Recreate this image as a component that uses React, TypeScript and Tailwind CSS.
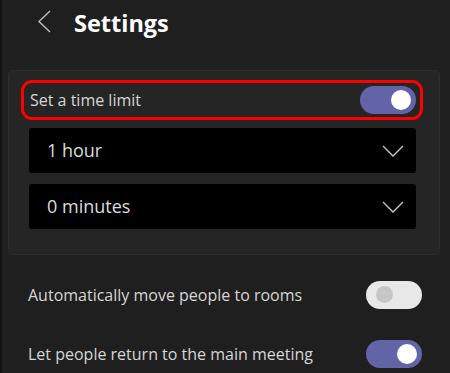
import React from "react";

function Toggle({ on }: { on: boolean }) {
  return on ? (
    <div className="flex h-[28px] w-[56px] items-center justify-end rounded-full bg-[#6264a7] pr-[5px]">
      <div className="h-[20px] w-[20px] rounded-full bg-white" />
    </div>
  ) : (
    <div className="flex h-[28px] w-[56px] items-center justify-start rounded-full bg-[#e8e8e8] pl-[10px]">
      <div className="h-[17px] w-[17px] rounded-full bg-[#c6c6c6]" />
    </div>
  );
}

function Chevron() {
  return (
    <svg width="22" height="12" viewBox="0 0 22 12" fill="none">
      <path d="M1 1 L11 11 L21 1" stroke="#c8c8c8" strokeWidth="1.3" />
    </svg>
  );
}

function Dropdown({ label }: { label: string }) {
  return (
    <div className="flex h-[45px] items-center justify-between rounded-[3px] bg-black pl-[18px] pr-[12px]">
      <span className="text-[18px] text-[#dcdcdc]">{label}</span>
      <Chevron />
    </div>
  );
}

export default function App() {
  return (
    <div
      className="h-[373px] w-[450px] overflow-hidden border-l-2 border-[#121212] bg-[#1f1f1f]"
      style={{ fontFamily: '"Open Sans", "Noto Sans", sans-serif' }}
    >
      <div className="flex h-[70px] items-start pt-[8px]">
        <div className="ml-[35px] mt-[2px]">
          <svg width="14" height="23" viewBox="0 0 14 23" fill="none">
            <path d="M13 1 L2 11.5 L13 22" stroke="#bdbdbd" strokeWidth="1.4" />
          </svg>
        </div>
        <div className="ml-[23px] text-[23.5px] font-bold leading-[30px] text-white">Settings</div>
      </div>

      <div className="ml-[6px] w-[432px] rounded-[5px] border border-[#2e2e2e] bg-[#252525] pb-[25px] pl-[20px] pr-[23px] pt-[9px]">
        <div className="relative flex h-[40px] items-center justify-between">
          <div className="pointer-events-none absolute -left-[8px] -right-[7px] top-0 bottom-0 rounded-[11px] border-[3px] border-[#ff0000]" />
          <span className="pl-[1px] text-[16px] text-[#d6d6d6]">Set a time limit</span>
          <Toggle on />
        </div>
        <div className="mt-[8px] flex flex-col gap-[11px]">
          <Dropdown label="1 hour" />
          <Dropdown label="0 minutes" />
        </div>
      </div>

      <div className="mt-[10px] flex flex-col pl-[26px] pr-[28px]">
        <div className="flex h-[59px] items-center justify-between">
          <span className="text-[16px] text-[#d6d6d6]">Automatically move people to rooms</span>
          <Toggle on={false} />
        </div>
        <div className="flex h-[59px] items-center justify-between">
          <span className="text-[16px] text-[#d6d6d6]">Let people return to the main meeting</span>
          <Toggle on />
        </div>
      </div>
    </div>
  );
}
